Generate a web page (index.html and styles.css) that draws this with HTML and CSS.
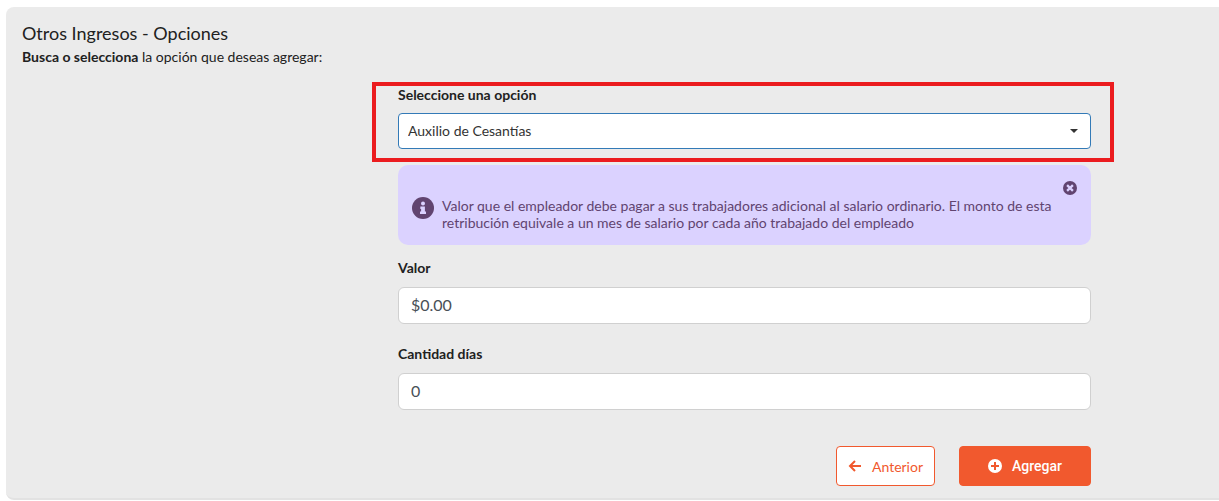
FILE: index.html
```html
<!DOCTYPE html>
<html lang="es">

<head>
    <meta charset="UTF-8">
    <meta name="viewport" content="width=device-width, initial-scale=1">
    <title>Otros Ingresos - Opciones</title>
    <link rel="stylesheet" href="styles.css">
</head>

<body>
    <main class="panel">
        <h1 class="title">Otros Ingresos - Opciones</h1>
        <p class="subtitle"><strong>Busca o selecciona</strong> la opción que deseas agregar:</p>

        <div class="layout">
            <form class="form">
                <div class="field highlighted">
                    <label for="opcion">Seleccione una opción</label>
                    <div class="select-box">
                        <select id="opcion" class="control select">
                            <option>Auxilio de Cesantías</option>
                        </select>
                        <svg class="caret" viewBox="0 0 8 4" aria-hidden="true"><path d="M0 0h8L4 4z"/></svg>
                    </div>
                </div>

                <div class="alert">
                    <button type="button" class="close" aria-label="Cerrar">
                        <svg viewBox="0 0 512 512" aria-hidden="true">
                            <circle cx="256" cy="256" r="256"/>
                            <path class="mark" d="M150 150l212 212M362 150L150 362"/>
                        </svg>
                    </button>
                    <svg class="info" viewBox="0 0 512 512" aria-hidden="true">
                        <circle cx="256" cy="256" r="256"/>
                        <g class="dot">
                            <circle cx="256" cy="152" r="46"/>
                            <path d="M194 220h106v120h26v58H186v-58h26v-62h-18z"/>
                        </g>
                    </svg>
                    <p>Valor que el empleador debe pagar a sus trabajadores adicional al salario ordinario. El monto de esta retribución equivale a un mes de salario por cada año trabajado del empleado</p>
                </div>

                <div class="field">
                    <label for="valor">Valor</label>
                    <input id="valor" class="control" type="text" value="$0.00">
                </div>

                <div class="field">
                    <label for="dias">Cantidad días</label>
                    <input id="dias" class="control" type="text" value="0">
                </div>

                <div class="actions">
                    <button type="button" class="btn btn-outline">
                        <svg class="arrow" viewBox="0 0 14 14" aria-hidden="true"><path d="M7 2L2 7l5 5M2 7h11"/></svg>
                        Anterior
                    </button>
                    <button type="submit" class="btn btn-primary">
                        <svg class="plus" viewBox="0 0 14 14" aria-hidden="true">
                            <circle cx="7" cy="7" r="7"/>
                            <path d="M7 3v8M3 7h8"/>
                        </svg>
                        Agregar
                    </button>
                </div>
            </form>
        </div>
    </main>
</body>

</html>
```
FILE: styles.css
```css
* {
    box-sizing: border-box;
}

body {
    margin: 0;
    padding: 7px 0 0 6px;
    background: #fff;
    color: #212121;
    font-family: Lato, "Liberation Sans", sans-serif;
    font-size: 14px;
    line-height: 20px;
}

.panel {
    padding: 14px 16px 12px;
    background: #ebebeb;
    border-bottom: 2px solid #e2e2e2;
    border-radius: 8px 0 0 8px;
}

.title {
    margin: 0;
    font-size: 18px;
    font-weight: 400;
    line-height: 24px;
}

.subtitle {
    margin: 2px 0 18px;
}

/* el formulario ocupa la columna central */
.layout {
    display: grid;
    grid-template-columns: 376fr 693fr 112fr;
}

.form {
    grid-column: 2;
    min-width: 0;
}

.field {
    position: relative;
    margin-bottom: 20px;
}

.field label {
    display: block;
    margin-bottom: 9px;
    font-weight: 700;
}

.highlighted {
    margin-bottom: 16px;
}

.highlighted label {
    margin-bottom: 8px;
}

.highlighted::after {
    content: "";
    position: absolute;
    inset: -3px -23px -13px -26px;
    border: 4px solid #eb1c1f;
    pointer-events: none;
}

.control {
    display: block;
    width: 100%;
    height: 37px;
    padding: 0 12px 2px;
    background: #fff;
    border: 1px solid #d0d0d0;
    border-radius: 6px;
    color: #495057;
    font-family: inherit;
    font-size: 16px;
}

.select-box {
    position: relative;
}

.select {
    height: 36px;
    padding: 0 32px 2px 9px;
    appearance: none;
    border-color: #337ab7;
    border-radius: 4px;
    color: #333;
    font-size: 14px;
}

.caret {
    position: absolute;
    top: 16px;
    right: 13px;
    width: 8px;
    height: 4px;
    fill: #333;
    pointer-events: none;
}

.alert {
    position: relative;
    display: flex;
    align-items: flex-start;
    gap: 8px;
    min-height: 80px;
    margin-bottom: 13px;
    padding: 32px 24px 12px 14px;
    background: #dbd2ff;
    border-radius: 10px;
    color: #614470;
}

.alert p {
    margin: 0;
    line-height: 17px;
}

.alert svg {
    fill: #614470;
}

.alert .info {
    flex: none;
    width: 22px;
    height: 22px;
}

.info .dot {
    fill: #dbd2ff;
}

.close {
    position: absolute;
    top: 16px;
    right: 14px;
    width: 14px;
    height: 14px;
    padding: 0;
    background: none;
    border: 0;
    cursor: pointer;
}

.close svg {
    display: block;
}

.close .mark {
    stroke: #dbd2ff;
    stroke-width: 84;
}

.actions {
    display: flex;
    justify-content: flex-end;
    gap: 24px;
    margin-top: 36px;
}

.btn {
    display: flex;
    align-items: center;
    justify-content: center;
    gap: 10px;
    height: 40px;
    padding: 0 10px;
    border: 1px solid #f1592e;
    border-radius: 4px;
    font-family: inherit;
    font-size: 14px;
    cursor: pointer;
}

.btn svg {
    width: 14px;
    height: 14px;
}

.btn-outline {
    min-width: 99px;
    background: #fff;
    color: #f1592e;
}

.btn-primary {
    min-width: 132px;
    background: #f1592e;
    color: #fff;
    font-family: Roboto, "Liberation Sans", sans-serif;
    font-weight: 500;
}

.arrow {
    fill: none;
    stroke: #f1592e;
    stroke-width: 2;
}

.plus {
    fill: #fff;
    stroke: none;
}

.plus path {
    stroke: #f1592e;
    stroke-width: 2;
}
```
